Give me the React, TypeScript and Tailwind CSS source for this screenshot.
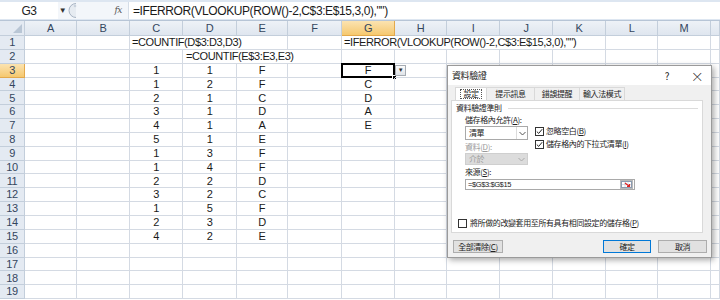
import React from "react"

const COLS = ["A", "B", "C", "D", "E", "F", "G", "H", "I", "J", "K", "L", "M", ""]

// C, D, E values and the G list for rows 3..15
const data: [number, number, string, string][] = [
  [1, 1, "F", "F"],
  [1, 2, "F", "C"],
  [2, 1, "C", "D"],
  [3, 1, "D", "A"],
  [4, 1, "A", "E"],
  [5, 1, "E", ""],
  [1, 3, "F", ""],
  [1, 4, "F", ""],
  [2, 2, "D", ""],
  [3, 2, "C", ""],
  [1, 5, "F", ""],
  [2, 3, "D", ""],
  [4, 2, "E", ""],
]

const gridLine = "border-r border-b border-[#d4dae3]"

function Cell({ children, className = "" }: { children?: React.ReactNode; className?: string }) {
  return (
    <div className={`relative flex items-center justify-center whitespace-nowrap ${gridLine} ${className}`}>
      {children}
    </div>
  )
}

function RowHead({ n, active = false }: { n: number; active?: boolean }) {
  return (
    <div
      className={`flex items-center justify-center border-r border-b ${
        active
          ? "border-[#e3a94c] bg-gradient-to-b from-[#fbe3b0] to-[#f5c86e]"
          : "border-[#c3cedb] bg-[#e4eaf2]"
      } text-[#34465e]`}
    >
      {n}
    </div>
  )
}

function Empty({ count }: { count: number }) {
  return (
    <>
      {Array.from({ length: count }).map((_, i) => (
        <Cell key={i} />
      ))}
    </>
  )
}

function Check({ checked }: { checked: boolean }) {
  return (
    <span className="flex h-[9px] w-[9px] shrink-0 items-center justify-center border border-[#333] bg-white">
      {checked && (
        <svg width="7" height="7" viewBox="0 0 7 7">
          <path d="M0.8 3.6 L2.7 5.4 L6.2 1.2" fill="none" stroke="#222" strokeWidth="1" />
        </svg>
      )}
    </span>
  )
}

function Chevron({ color = "#555" }: { color?: string }) {
  return (
    <svg width="7" height="5" viewBox="0 0 7 5">
      <path d="M0.5 1 L3.5 4 L6.5 1" fill="none" stroke={color} strokeWidth="1" />
    </svg>
  )
}

function Dialog() {
  return (
    <div className="absolute left-[447px] top-[65px] flex h-[193px] w-[265px] flex-col border border-[#9a9a9a] bg-[#f0f0f0] font-['Noto_Sans_CJK_TC','Noto_Sans_CJK_SC',sans-serif] text-[8px] leading-[10px] text-[#222] shadow-[2px_2px_6px_rgba(0,0,0,0.35)]">
      {/* title bar */}
      <div className="flex h-[19px] items-center bg-white pl-[4px]">
        <span className="text-[9px]">資料驗證</span>
        <span className="ml-auto w-[10px] text-center text-[10px]">?</span>
        <span className="ml-[18px] mr-[7px] w-[14px] text-center text-[13px] font-light">×</span>
      </div>

      <div className="flex flex-1 flex-col px-[3px]">
        {/* tabs */}
        <div className="mt-[2px] flex h-[13px] pl-[4px]">
          <div className="flex w-[32px] items-center justify-center border border-b-0 border-[#d9d9d9] bg-white">
            <span className="border border-dotted border-[#555] px-[2px] leading-[8px]">設定</span>
          </div>
          <div className="flex w-[48px] items-center justify-center border-t border-r border-[#d9d9d9]">提示訊息</div>
          <div className="flex w-[45px] items-center justify-center border-t border-r border-[#d9d9d9]">錯誤提醒</div>
          <div className="flex w-[45px] items-center justify-center border-t border-r border-[#d9d9d9]">輸入法模式</div>
        </div>

        {/* panel */}
        <div className="flex h-[133px] w-[252px] flex-col border border-[#d9d9d9] bg-white">
          <div className="mt-[2px] flex h-[10px] items-center pl-[4px]">
            <span>資料驗證準則</span>
            <span className="ml-[6px] mr-[4px] flex-1 border-t border-[#dcdcdc]" />
          </div>
          <div className="mt-[2px] h-[10px] pl-[13px]">
            儲存格內允許(<span className="underline">A</span>):
          </div>
          <div className="mt-[1px] flex pl-[13px]">
            <div className="flex w-[63px] flex-col">
              <div className="flex h-[14px] items-center border border-[#a9a9a9] bg-white">
                <span className="flex-1 pl-[3px]">清單</span>
                <span className="flex h-full w-[11px] items-center justify-center border-l border-[#dcdcdc]">
                  <Chevron />
                </span>
              </div>
              <div className="mt-[2px] h-[10px] text-[#9a9a9a]">
                資料(<span className="underline">D</span>):
              </div>
              <div className="mt-[1px] flex h-[12px] items-center border border-[#cfcfcf] bg-[#dcdcdc] text-[#9a9a9a]">
                <span className="flex-1 pl-[3px]">介於</span>
                <span className="flex h-full w-[11px] items-center justify-center">
                  <Chevron color="#aaa" />
                </span>
              </div>
            </div>
            <div className="ml-[7px] flex flex-col">
              <div className="flex h-[10px] items-center gap-[2px]">
                <Check checked />
                <span>忽略空白(<span className="underline">B</span>)</span>
              </div>
              <div className="mt-[3px] flex h-[10px] items-center gap-[2px]">
                <Check checked />
                <span>儲存格內的下拉式清單(<span className="underline">I</span>)</span>
              </div>
            </div>
          </div>
          <div className="mt-[2px] h-[10px] pl-[13px]">
            來源(<span className="underline">S</span>):
          </div>
          <div className="ml-[13px] mt-[2px] flex h-[11px] w-[170px] items-center border border-[#a9a9a9] bg-white">
            <span className="flex-1 pl-[2px] font-['Liberation_Sans',sans-serif] text-[7.5px]">=$G$3:$G$15</span>
            <span className="mr-[1px] flex h-[9px] w-[13px] items-center justify-center border border-[#b9b9b9] bg-[#eef2f6]">
              <svg width="11" height="7" viewBox="0 0 11 7">
                <rect x="0.5" y="0.5" width="10" height="6" fill="#fff" stroke="#8a9bb0" />
                <path d="M1 3.5 H10 M4 1 V6 M7 1 V6" stroke="#c5cfdb" strokeWidth="0.7" />
                <path d="M4 2 L8.5 5.5 M8.5 3 V5.5 H6" fill="none" stroke="#d22" strokeWidth="1.2" />
              </svg>
            </span>
          </div>
          <div className="mb-[4px] mt-auto flex h-[10px] items-center gap-[3px] pl-[6px]">
            <Check checked={false} />
            <span>將所做的改變套用至所有具有相同設定的儲存格(<span className="underline">P</span>)</span>
          </div>
        </div>

        {/* buttons */}
        <div className="mt-[7px] flex h-[13px]">
          <div className="ml-[2px] flex w-[50px] items-center justify-center border border-[#adadad] bg-[#e1e1e1]">
            全部清除(<span className="underline">C</span>)
          </div>
          <div className="ml-auto flex w-[48px] items-center justify-center border border-[#0078d7] bg-[#e1e1e1]">確定</div>
          <div className="ml-[7px] mr-[1px] flex w-[49px] items-center justify-center border border-[#adadad] bg-[#e1e1e1]">取消</div>
        </div>
      </div>
    </div>
  )
}

export default function App() {
  return (
    <div className="relative h-[300px] w-[720px] overflow-hidden bg-white font-['Liberation_Sans',Arial,sans-serif] text-[11px] tracking-[-0.4px] text-[#1a1a1a]">
      {/* formula bar */}
      <div className="flex h-[21px] items-end border-b border-[#b7c5d6] bg-[#dde6f1] pb-[1px]">
        <div className="flex h-[17px] w-[58px] items-center justify-center bg-white text-[12px] text-[#222]">G3</div>
        <div className="flex h-[17px] w-[9px] items-center justify-center bg-[#f3f6fa] text-[8px] text-[#333]">▼</div>
        <div className="flex h-[17px] w-[61px] items-center bg-[#f3f6fa]">
          <svg width="12" height="17" viewBox="0 0 12 17">
            <path d="M9 1.5 A7 7 0 0 0 9 15.5" fill="#e6ebf1" stroke="#a8b4c4" />
            <circle cx="8" cy="4" r="1.3" fill="#c9d2dd" />
          </svg>
          <span className="ml-auto mr-[6px] font-['DejaVu_Serif',serif] text-[9px] italic text-[#555]">fx</span>
        </div>
        <div className="flex h-[17px] flex-1 items-center border-l border-[#d5dde7] bg-white pl-[4px] text-[12px]">
          =IFERROR(VLOOKUP(ROW()-2,C$3:E$15,3,0),"")
        </div>
      </div>

      {/* sheet grid */}
      <div className="grid grid-cols-[25px_52px_53px_53px_54px_51px_54px_53px_52px_53px_53px_53px_52px_53px_1fr] grid-rows-[15px] auto-rows-[13.85px] text-[11px]">
        {/* header row */}
        <div className="relative border-r border-b border-[#c3cedb] bg-[#e4eaf2]">
          <svg className="absolute bottom-[2px] right-[2px]" width="9" height="9" viewBox="0 0 9 9">
            <path d="M9 0 V9 H0 Z" fill="#b9c6d5" />
          </svg>
        </div>
        {COLS.map((c) => (
          <div
            key={c || "N"}
            className={`flex items-center justify-center border-r border-b ${
              c === "G"
                ? "border-[#e3a94c] bg-gradient-to-b from-[#fbe3b0] to-[#f5c86e]"
                : "border-[#c3cedb] bg-gradient-to-b from-[#eef2f7] to-[#dfe6ef]"
            } text-[#34465e]`}
          >
            {c}
          </div>
        ))}

        {/* row 1: formulas spill over the next empty cells */}
        <RowHead n={1} />
        <Empty count={2} />
        <Cell className="col-span-3 justify-start pl-[2px]">=COUNTIF(D$3:D3,D3)</Cell>
        <Cell />
        <Cell className="col-span-5 justify-start pl-[2px]">=IFERROR(VLOOKUP(ROW()-2,C$3:E$15,3,0),"")</Cell>
        <Empty count={3} />

        {/* row 2 */}
        <RowHead n={2} />
        <Empty count={3} />
        <Cell className="col-span-3 justify-start pl-[3px]">=COUNTIF(E$3:E3,E3)</Cell>
        <Empty count={8} />

        {/* rows 3..15 */}
        {data.map(([c, d, e, g], i) => (
          <React.Fragment key={i}>
            <RowHead n={i + 3} active={i === 0} />
            <Empty count={2} />
            <Cell>{c}</Cell>
            <Cell>{d}</Cell>
            <Cell>{e}</Cell>
            <Cell />
            <Cell>
              {g}
              {i === 0 && (
                <>
                  <span className="absolute -left-[1px] -top-[1px] bottom-[-1px] right-[-1px] border-2 border-black" />
                  <span className="absolute bottom-[-3px] right-[-3px] h-[5px] w-[5px] border border-white bg-black" />
                  <span className="absolute left-[calc(100%+1px)] top-[1px] flex h-[11px] w-[11px] items-center justify-center border border-[#a6acb3] bg-gradient-to-b from-[#fdfdfd] to-[#dfe3e8] text-[6px] text-[#333]">
                    ▼
                  </span>
                </>
              )}
            </Cell>
            <Empty count={7} />
          </React.Fragment>
        ))}

        {/* rows 16..19 */}
        {[16, 17, 18, 19].map((n) => (
          <React.Fragment key={n}>
            <RowHead n={n} />
            <Empty count={14} />
          </React.Fragment>
        ))}
      </div>

      <Dialog />
    </div>
  )
}
